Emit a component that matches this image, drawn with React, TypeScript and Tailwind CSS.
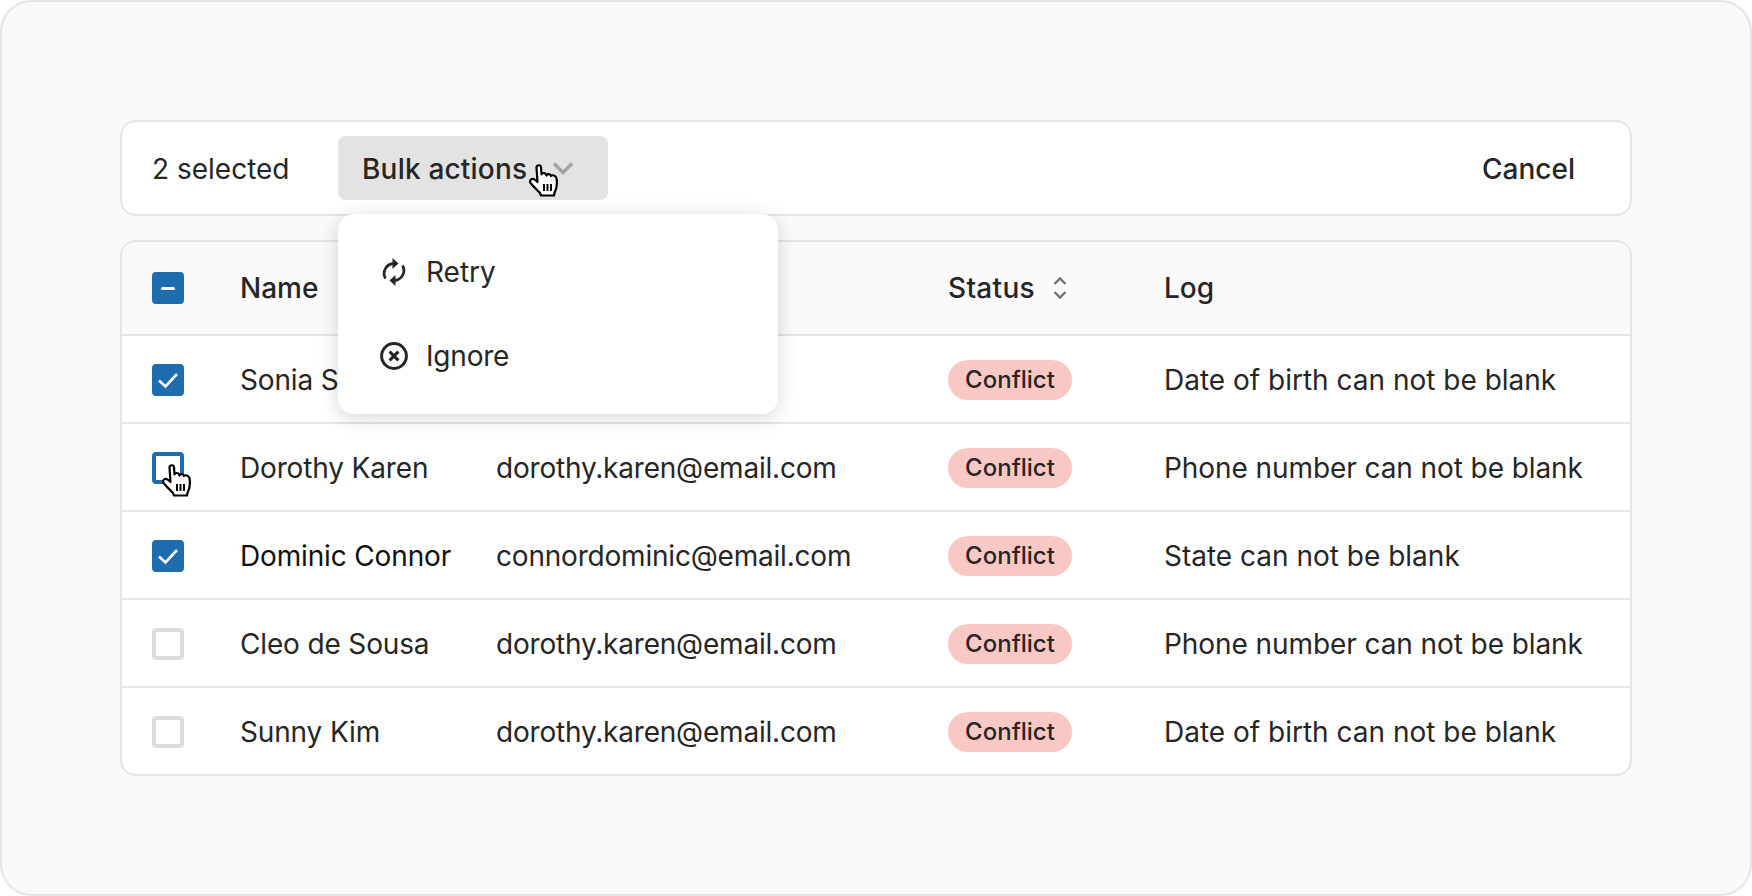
const font = { fontFamily: "Inter, 'Noto Sans', sans-serif" };

function HandCursor({ className }: { className: string }) {
  return (
    <svg className={className} width="30" height="33" viewBox="0 0 30 33" fill="none">
      <path
        d="M7.5 3.5C7.5.5 12 .5 12 3.5L12.5 10.5C13 8.5 16.5 8.5 17 10.5L17.5 11.5C18 9.5 21.5 9.7 22 12C23 10.5 27 11.5 27.5 14.5C28.5 20 27.5 25 25.5 29L25 31.5L12 31.5L11 29C8 26 4 22 1.5 19C0 16.5 3 13.5 5.5 15.5L8.5 18Z"
        fill="#fff"
        stroke="#000"
        strokeWidth="2.2"
        strokeLinejoin="round"
      />
      <path d="M15 20V27M18.5 20V27M22 20V27" stroke="#000" strokeWidth="2" />
    </svg>
  );
}

function Check({ state }: { state: "on" | "mixed" | "off" | "hover" }) {
  if (state === "on")
    return (
      <span className="flex h-8 w-8 items-center justify-center rounded-[4px] bg-[#1f6dae]">
        <svg width="24" height="24" viewBox="0 0 24 24" fill="none">
          <path d="M3 12.5L9.5 18.5L21 6" stroke="#fff" strokeWidth="2.6" />
        </svg>
      </span>
    );
  if (state === "mixed")
    return (
      <span className="flex h-8 w-8 items-center justify-center rounded-[4px] bg-[#1f6dae]">
        <span className="h-[3px] w-[14px] rounded-sm bg-white" />
      </span>
    );
  if (state === "hover")
    return <span className="block h-8 w-8 rounded-[4px] border-4 border-[#1f6dae] bg-white" />;
  return <span className="block h-8 w-8 rounded-[4px] border-4 border-[#dcdcdc] bg-white" />;
}

const rows = [
  { check: "on", name: "Sonia Sung", email: "sonia.s@email.com", log: "Date of birth can not be blank", logClass: "" },
  { check: "hover", name: "Dorothy Karen", email: "dorothy.karen@email.com", log: "Phone number can not be blank", logClass: "tracking-[-0.08px]" },
  { check: "on", name: "Dominic Connor", email: "connordominic@email.com", log: "State can not be blank", logClass: "", dark: true },
  { check: "off", name: "Cleo de Sousa", email: "dorothy.karen@email.com", log: "Phone number can not be blank", logClass: "tracking-[-0.08px]" },
  { check: "off", name: "Sunny Kim", email: "dorothy.karen@email.com", log: "Date of birth can not be blank", logClass: "" },
] as const;

export default function App() {
  return (
    <div style={font} className="h-[896px] w-[1752px] overflow-hidden rounded-[32px] border-2 border-[#e5e5e5] bg-[#fafafa] px-[118px] pt-[118px] text-[28px] text-[#262626]">
      <div className="relative flex h-[96px] items-center rounded-[16px] border-2 border-[#e5e5e5] bg-white pl-[30px] pr-[55px]">
        <span className="w-[186px] pt-[1px]">2 selected</span>
        <div className="flex h-16 w-[270px] items-center justify-between rounded-[8px] bg-[#e3e3e3] pl-6 pr-[34px]">
          <span className="pt-[1px] font-[450] tracking-[0.2px]">Bulk actions</span>
          <svg width="22" height="14" viewBox="0 0 22 14" fill="none">
            <path d="M2 2.5L11 11.5L20 2.5" stroke="#a3a3a3" strokeWidth="3.4" />
          </svg>
        </div>
        <span className="ml-auto pt-[1px] font-[450]">Cancel</span>
        <HandCursor className="absolute left-[407px] top-[42px] z-20" />
        <div className="absolute left-[216px] top-[92px] z-10 flex h-[200px] w-[440px] flex-col justify-center rounded-[16px] bg-white shadow-[0_4px_20px_rgba(0,0,0,0.16)]">
          <div className="flex h-[84px] items-center gap-[18px] pl-[42px]">
            <svg width="28" height="30" viewBox="0 0 28 30" fill="none">
              <path d="M5.5 21.5A10 10 0 0 1 14 6.5" stroke="#262626" strokeWidth="2.8" />
              <path d="M12.5 1L18.5 6.5L12.5 12Z" fill="#262626" />
              <path d="M22.5 8.5A10 10 0 0 1 14 23.5" stroke="#262626" strokeWidth="2.8" />
              <path d="M15.5 18L9.5 23.5L15.5 29Z" fill="#262626" />
            </svg>
            <span>Retry</span>
          </div>
          <div className="flex h-[84px] items-center gap-[18px] pl-[42px]">
            <svg width="28" height="28" viewBox="0 0 28 28" fill="none">
              <circle cx="14" cy="14" r="12.4" stroke="#262626" strokeWidth="3" />
              <path d="M9.6 9.6L18.4 18.4M18.4 9.6L9.6 18.4" stroke="#262626" strokeWidth="3" />
            </svg>
            <span className="tracking-[-0.2px]">Ignore</span>
          </div>
        </div>
      </div>

      <div className="relative mt-6 overflow-hidden rounded-[16px] border-2 border-[#e5e5e5] bg-white">
        <div className="flex h-[92px] items-center bg-[#fafafa] font-[450]">
          <div className="w-[118px] pl-[30px]"><Check state="mixed" /></div>
          <div className="w-[256px]">Name</div>
          <div className="w-[452px]" />
          <div className="flex w-[216px] items-center gap-[18px]">
            <span className="tracking-[0.3px]">Status</span>
            <svg width="14" height="24" viewBox="0 0 14 24" fill="none">
              <path d="M1.5 8L7 2.5L12.5 8M1.5 16L7 21.5L12.5 16" stroke="#737373" strokeWidth="2.4" />
            </svg>
          </div>
          <div>Log</div>
        </div>
        {rows.map((r) => (
          <div key={r.name + r.log} className="flex h-[88px] items-center border-t-2 border-[#e5e5e5] pt-[2px]">
            <div className="relative w-[118px] pl-[30px]">
              <Check state={r.check} />
              {r.check === "hover" && <HandCursor className="absolute left-[40px] top-[12px]" />}
            </div>
            <div className={`w-[256px] tracking-[-0.15px] ${"dark" in r ? "text-[#111]" : ""}`}>{r.name}</div>
            <div className="w-[452px] tracking-[-0.2px]">{r.email}</div>
            <div className="flex w-[216px] items-center">
              <span className="flex h-10 w-[124px] items-center justify-center rounded-full bg-[#fac8c4] text-[24px] font-[450]">Conflict</span>
            </div>
            <div className={r.logClass}>{r.log}</div>
          </div>
        ))}
      </div>
    </div>
  );
}
